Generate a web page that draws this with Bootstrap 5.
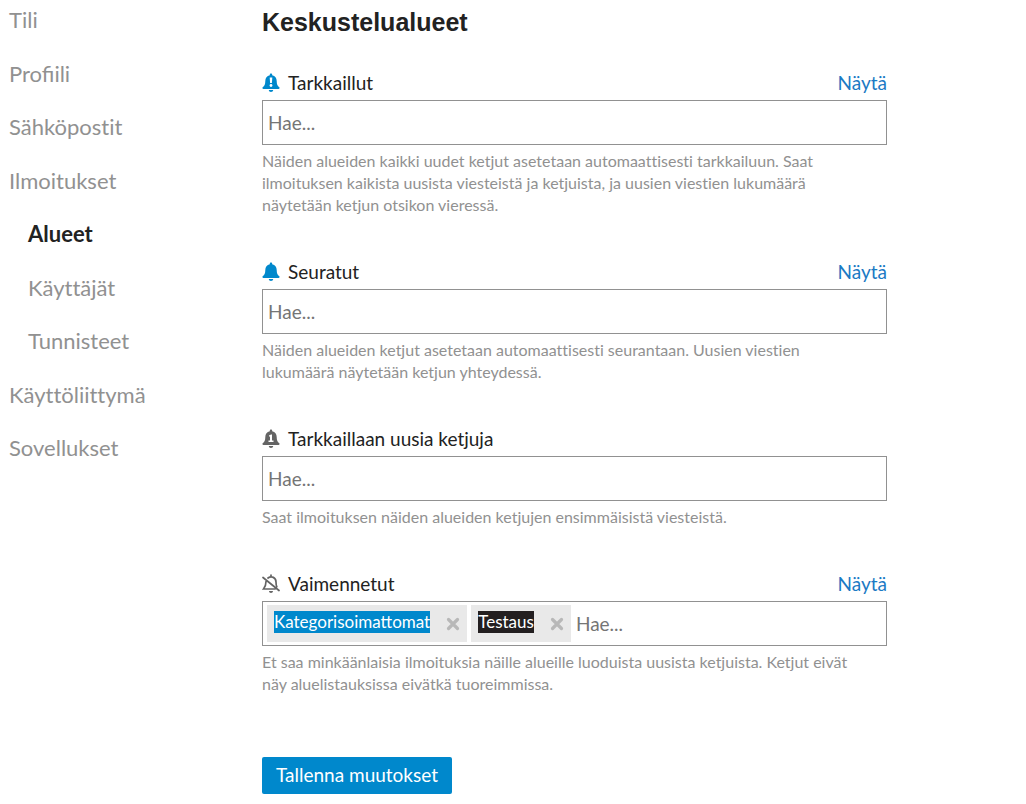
<!DOCTYPE html>
<html lang="fi">
<head>
<meta charset="utf-8">
<meta name="viewport" content="width=device-width, initial-scale=1">
<title>Keskustelualueet</title>
<link href="https://cdn.jsdelivr.net/npm/bootstrap@5.3.0/dist/css/bootstrap.min.css" rel="stylesheet">
<style>
body{font-family:Lato,sans-serif;font-size:19px;line-height:24px;color:#222;font-variant-ligatures:none}
.side{width:262px;padding:8px 9px}
.side .nav-link{padding:0;margin-bottom:30px;font-size:22px;line-height:24px;color:#919191;white-space:nowrap}
.side .nav-link:nth-child(even){margin-bottom:29px}
.side .nav-link.sub{padding-left:19px}
.side .nav-link.active{color:#222;font-weight:700}
.lig{font-variant-ligatures:normal}
.prefs{max-width:625px;min-width:0}
h1{font-family:"Liberation Sans",Arial,sans-serif;font-size:25px;line-height:30px;font-weight:700;margin:7px 0 34px}
.group{margin-bottom:44px}
.group label{gap:8px}
.group a{color:#1b7ac4;text-decoration:none}
.group label svg{width:18px;height:20px}
.picker{border:1px solid #919191;min-height:45px;margin-top:5px;padding:3px 4px;gap:4px}
.picker input{border:0;outline:0;background:none;padding:0 1px;min-width:0;line-height:24px;color:#222}
.picker input::placeholder{color:#757575;opacity:1}
.picker:focus-within{border-color:#08c}
.chip{background:#e9e9e9;border:0;height:37px;padding:0 7px;font-size:17px;color:#fff}
.chip span{line-height:22px;margin-bottom:3px}
.chip svg{width:14px;height:14px;margin-left:16px}
.blue{background:#08c}
.dark{background:#231f20}
.help{font-size:16px;line-height:22px;color:#919191;margin:5px 0 0;padding-right:16px}
.save{background:#08c;color:#fff;border:0;border-radius:2px;padding:6px 14px 7px;margin:18px 0 10px}
</style>
</head>
<body>
<svg class="d-none" aria-hidden="true">
<symbol id="bell" viewBox="0 0 18 20"><path d="M9 0.500c.7 0 1.200.5 1.200 1.200v.6c2.900.6 4.500 2.800 4.500 5.600 0 3.500.9 4.800 2.600 6.400.6.600.2 1.700-.7 1.700H1.400c-.9 0-1.300-1.100-.7-1.700 1.700-1.600 2.600-2.900 2.600-6.400 0-2.800 1.600-5 4.500-5.600v-.6C7.800 1 8.300.5 9 .5zM6.800 17h4.400c0 1.200-1 2-2.200 2s-2.200-.8-2.200-2z"/></symbol>
<symbol id="times" viewBox="0 0 14 14"><path d="M2.500 2.500l9 9m0-9l-9 9" stroke="#b8b8b8" stroke-width="3.200" stroke-linecap="round"/></symbol>
</svg>
<div class="d-flex">
<nav class="side nav flex-column flex-nowrap flex-shrink-0" aria-label="Asetukset">
<a class="nav-link" href="#">Tili</a>
<a class="nav-link lig" href="#">Profiili</a>
<a class="nav-link" href="#">Sähköpostit</a>
<a class="nav-link" href="#">Ilmoitukset</a>
<a class="nav-link sub active" href="#" aria-current="page">Alueet</a>
<a class="nav-link sub" href="#">Käyttäjät</a>
<a class="nav-link sub" href="#">Tunnisteet</a>
<a class="nav-link" href="#">Käyttöliittymä</a>
<a class="nav-link" href="#">Sovellukset</a>
</nav>
<main class="prefs flex-grow-1">
<h1>Keskustelualueet</h1>
<form>
<section class="group">
<div class="d-flex justify-content-between">
<label class="d-flex align-items-center" for="watched"><svg fill="#08c" aria-hidden="true"><use href="#bell"/><path d="M7.700 4.500h2.600l-.4 5.500H8.100z" fill="#fff"/><circle cx="9" cy="12.500" r="1.400" fill="#fff"/></svg>Tarkkaillut</label>
<a href="#">Näytä</a></div>
<div class="picker d-flex align-items-center"><input class="flex-grow-1" id="watched" type="text" placeholder="Hae..."></div>
<p class="help">Näiden alueiden kaikki uudet ketjut asetetaan automaattisesti tarkkailuun. Saat ilmoituksen kaikista uusista viesteistä ja ketjuista, ja uusien viestien lukumäärä näytetään ketjun otsikon vieressä.</p>
</section>
<section class="group">
<div class="d-flex justify-content-between">
<label class="d-flex align-items-center" for="tracked"><svg fill="#08c" aria-hidden="true"><use href="#bell"/></svg>Seuratut</label>
<a href="#">Näytä</a></div>
<div class="picker d-flex align-items-center"><input class="flex-grow-1" id="tracked" type="text" placeholder="Hae..."></div>
<p class="help">Näiden alueiden ketjut asetetaan automaattisesti seurantaan. Uusien viestien lukumäärä näytetään ketjun yhteydessä.</p>
</section>
<section class="group">
<div class="d-flex justify-content-between">
<label class="d-flex align-items-center" for="first"><svg fill="#646464" aria-hidden="true"><use href="#bell"/><path d="M7 6.500l2-1h1v6h1.500v1.500h-5v-1.500H8V7.500H7z" fill="#fff"/></svg>Tarkkaillaan uusia ketjuja</label></div>
<div class="picker d-flex align-items-center"><input class="flex-grow-1" id="first" type="text" placeholder="Hae..."></div>
<p class="help">Saat ilmoituksen näiden alueiden ketjujen ensimmäisistä viesteistä.</p>
</section>
<section class="group">
<div class="d-flex justify-content-between">
<label class="d-flex align-items-center" for="muted"><svg fill="none" stroke="#646464" stroke-width="1.700" stroke-linecap="round" aria-hidden="true"><path d="M9 1v2M6 4c3.500-2.600 8-.4 8 4 0 2 .2 3.500.8 4.700M4 7.500c0 3.500-.7 5.300-2.500 7.500H13M1 3.500l16 13"/><path d="M7 17h4c0 1.200-.9 2-2 2s-2-.8-2-2z" fill="#646464" stroke="none"/></svg>Vaimennetut</label>
<a href="#">Näytä</a></div>
<div class="picker d-flex align-items-center">
<button class="chip d-flex align-items-center flex-shrink-0" type="button"><span class="blue">Kategorisoimattomat</span><svg aria-hidden="true"><use href="#times"/></svg></button>
<button class="chip d-flex align-items-center flex-shrink-0" type="button"><span class="dark">Testaus</span><svg aria-hidden="true"><use href="#times"/></svg></button>
<input class="flex-grow-1" id="muted" type="text" placeholder="Hae..."></div>
<p class="help">Et saa minkäänlaisia ilmoituksia näille alueille luoduista uusista ketjuista. Ketjut eivät näy aluelistauksissa eivätkä tuoreimmissa.</p>
</section>
<button class="save" type="submit">Tallenna muutokset</button>
</form>
</main>
</div>
<script src="https://cdn.jsdelivr.net/npm/bootstrap@5.3.0/dist/js/bootstrap.bundle.min.js"></script>
</body>
</html>
